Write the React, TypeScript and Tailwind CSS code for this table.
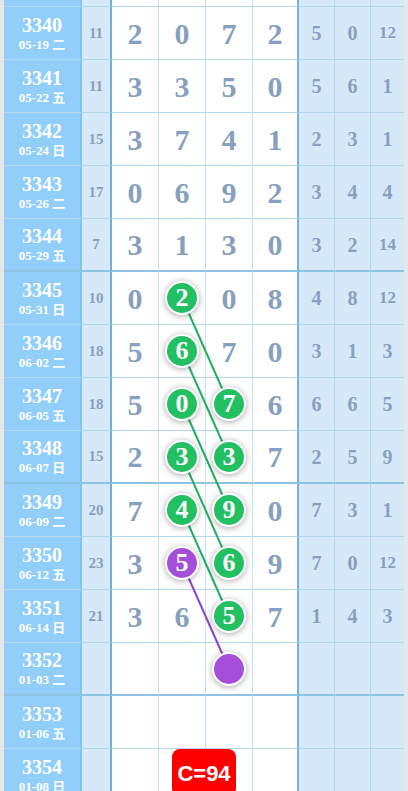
type Ball = { col: number; n: string; purple?: boolean };
type Row = {
    qi: string;
    date: string;
    w: string;
    d: string[];
    r: string[];
    balls?: Ball[];
    thick?: boolean;
};

const rows: Row[] = [
    { qi: '3340', date: '05-19 二', w: '11', d: ['2', '0', '7', '2'], r: ['5', '0', '12'] },
    { qi: '3341', date: '05-22 五', w: '11', d: ['3', '3', '5', '0'], r: ['5', '6', '1'] },
    { qi: '3342', date: '05-24 日', w: '15', d: ['3', '7', '4', '1'], r: ['2', '3', '1'] },
    { qi: '3343', date: '05-26 二', w: '17', d: ['0', '6', '9', '2'], r: ['3', '4', '4'] },
    { qi: '3344', date: '05-29 五', w: '7', d: ['3', '1', '3', '0'], r: ['3', '2', '14'], thick: true },
    { qi: '3345', date: '05-31 日', w: '10', d: ['0', '2', '0', '8'], r: ['4', '8', '12'], balls: [{ col: 1, n: '2' }] },
    { qi: '3346', date: '06-02 二', w: '18', d: ['5', '6', '7', '0'], r: ['3', '1', '3'], balls: [{ col: 1, n: '6' }] },
    { qi: '3347', date: '06-05 五', w: '18', d: ['5', '0', '7', '6'], r: ['6', '6', '5'], balls: [{ col: 1, n: '0' }, { col: 2, n: '7' }] },
    { qi: '3348', date: '06-07 日', w: '15', d: ['2', '3', '3', '7'], r: ['2', '5', '9'], balls: [{ col: 1, n: '3' }, { col: 2, n: '3' }], thick: true },
    { qi: '3349', date: '06-09 二', w: '20', d: ['7', '4', '9', '0'], r: ['7', '3', '1'], balls: [{ col: 1, n: '4' }, { col: 2, n: '9' }] },
    { qi: '3350', date: '06-12 五', w: '23', d: ['3', '5', '6', '9'], r: ['7', '0', '12'], balls: [{ col: 1, n: '5', purple: true }, { col: 2, n: '6' }] },
    { qi: '3351', date: '06-14 日', w: '21', d: ['3', '6', '5', '7'], r: ['1', '4', '3'], balls: [{ col: 2, n: '5' }] },
    { qi: '3352', date: '01-03 二', w: '', d: ['', '', '', ''], r: ['', '', ''], balls: [{ col: 2, n: '', purple: true }], thick: true },
    { qi: '3353', date: '01-06 五', w: '', d: ['', '', '', ''], r: ['', '', ''] },
    { qi: '3354', date: '01-08 日', w: '', d: ['', '', '', ''], r: ['', '', ''] },
];

// 连线: 起点/终点 (相对表格容器)
const greenLines = [
    [178, 298, 225, 404],
    [178, 351, 225, 457],
    [178, 404, 225, 510],
    [178, 457, 225, 563],
    [178, 510, 225, 616],
];
const purpleLines = [[178, 563, 225, 669]];

const serif = "font-['Liberation_Serif','Noto_Sans_CJK_SC',serif] font-bold";

const TableRow = ({ row, top }: { row?: Row; top?: boolean }) => {
    const b = row?.thick ? 'border-b-2 border-b-[#8cc4e2]' : 'border-b border-b-[#b4d9ec]';
    const h = top ? 'h-[7px]' : 'h-[53px]';
    const cell = `${h} ${b} flex items-center justify-center`;

    return (
        <div className="grid grid-cols-[78px_30px_47px_47px_47px_46px_36px_36px_33px]">
            <div className={`${cell} flex-col bg-[#91cefa] border-r-2 border-r-[#86c3e6] text-white ${serif}`}>
                {row && (
                    <>
                        <span className="text-[20px] leading-[22px]">{row.qi}</span>
                        <span className="text-[13px] leading-[17px]">{row.date}</span>
                    </>
                )}
            </div>
            <div className={`${cell} bg-[#d6e9f9] border-r-2 border-r-[#72afd6] text-[#899fbf] text-[15px] ${serif}`}>
                {row?.w}
            </div>
            {[0, 1, 2, 3].map((i) => {
                const ball = row?.balls?.find((x) => x.col === i);
                const edge = i === 3 ? 'border-r-2 border-r-[#75b0d6]' : 'border-r border-r-[#c6e3f1]';
                return (
                    <div key={i} className={`${cell} bg-white ${edge} text-[#899fbf] text-[30px] ${serif}`}>
                        {ball ? (
                            <div
                                className={`relative z-20 flex h-[34px] w-[34px] items-center justify-center rounded-full border-2 border-white text-[26px] leading-none text-white shadow-[0_1px_6px_rgba(0,0,0,0.35)] ${
                                    ball.purple ? 'bg-[#a44ed9]' : 'bg-[#22bf63]'
                                }`}
                            >
                                {ball.n}
                            </div>
                        ) : (
                            row?.d[i]
                        )}
                    </div>
                );
            })}
            {[0, 1, 2].map((i) => {
                const v = row?.r[i] ?? '';
                return (
                    <div
                        key={i}
                        className={`${cell} bg-[#d6e9f9] ${i < 2 ? 'border-r border-r-[#b1d8ec]' : ''} text-[#899fbf] ${
                            v.length > 1 ? 'text-[17px]' : 'text-[20px]'
                        } ${serif}`}
                    >
                        {v}
                    </div>
                );
            })}
        </div>
    );
};

const App = () => {
    return (
        <div className="min-h-screen w-[408px] bg-[#e8e8e8] px-[4px]">
            <div className="relative w-[400px]">
                <TableRow top />
                {rows.map((row) => (
                    <TableRow key={row.qi} row={row} />
                ))}

                {/* 走势连线 */}
                <svg className="pointer-events-none absolute inset-0 z-10 h-full w-full">
                    {greenLines.map(([x1, y1, x2, y2], i) => (
                        <line key={i} x1={x1} y1={y1} x2={x2} y2={y2} stroke="#22b060" strokeWidth="2" />
                    ))}
                    {purpleLines.map(([x1, y1, x2, y2], i) => (
                        <line key={i} x1={x1} y1={y1} x2={x2} y2={y2} stroke="#8e44c9" strokeWidth="2" />
                    ))}
                </svg>

                <div className="absolute left-[168px] top-[749px] z-30 flex h-[48px] w-[64px] items-center justify-center rounded-lg bg-[#ff0000] font-['Liberation_Sans',sans-serif] text-[22px] font-bold text-white">
                    C=94
                </div>
            </div>
        </div>
    );
};

export default App;
